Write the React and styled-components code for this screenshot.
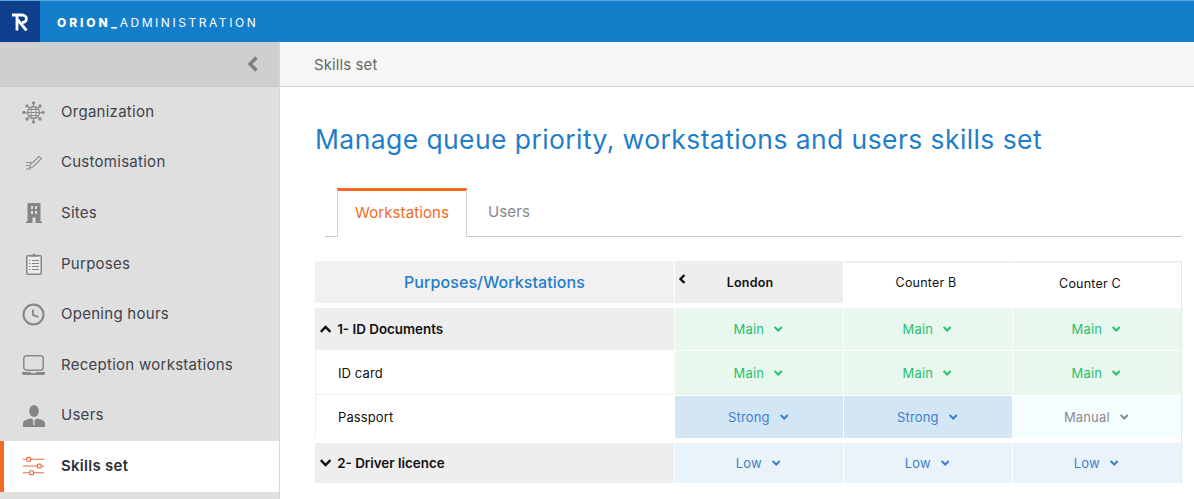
import React from "react";
import styled, { createGlobalStyle } from "styled-components";

const GlobalStyle = createGlobalStyle`
  html, body {
    margin: 0;
    padding: 0;
    height: 100%;
    overflow: hidden;
    background: #fff;
    font-family: "Inter", "Noto Sans", sans-serif;
  }
  * { box-sizing: border-box; }
`;

const Page = styled.div`
  width: 1194px;
  height: 499px;
  display: flex;
  flex-direction: column;
  overflow: hidden;
`;

const TopBar = styled.header`
  height: 42px;
  flex: none;
  background: #157ecb;
  border-top: 1px solid #5aa5dc;
  display: flex;
`;

const LogoBox = styled.div`
  width: 40px;
  background: #0d3f8c;
  display: flex;
  align-items: center;
  justify-content: center;
`;

const Brand = styled.div`
  margin-left: 17px;
  padding-top: 1px;
  display: flex;
  align-items: center;
  color: #fff;
  font-size: 12px;
  letter-spacing: 2.55px;
  b { font-weight: 800; letter-spacing: 2.9px; }
  span { font-weight: 400; }
`;

const Body = styled.div`
  flex: 1;
  display: flex;
  min-height: 0;
`;

const Sidebar = styled.aside`
  width: 280px;
  flex: none;
  background: #dfdfdf;
  border-right: 1px solid #d6d6d6;
`;

const Collapse = styled.div`
  height: 45px;
  background: #cfcfcf;
  border-bottom: 1px solid #c4c4c4;
  display: flex;
  align-items: center;
  justify-content: flex-end;
  padding-right: 20px;
`;

const NavItem = styled.div`
  height: 50.6px;
  display: flex;
  align-items: center;
  gap: 16px;
  padding-left: ${(p) => (p.$active ? "18px" : "22px")};
  font-size: 15px;
  letter-spacing: 0.27px;
  color: ${(p) => (p.$active ? "#2c2f36" : "#3f434c")};
  font-weight: ${(p) => (p.$active ? 600 : 400)};
  background: ${(p) => (p.$active ? "#fff" : "transparent")};
  border-left: ${(p) => (p.$active ? "4px solid #f26a25" : "none")};
`;

const NavLabel = styled.span`
  padding-bottom: 2px;
`;

const IconSlot = styled.span`
  width: 23px;
  height: 24px;
  flex: none;
  display: flex;
  align-items: center;
  justify-content: center;
`;

const Main = styled.main`
  flex: 1;
  min-width: 0;
`;

const Crumb = styled.div`
  height: 45px;
  background: #f6f6f6;
  border-bottom: 1px solid #d4d4d4;
  padding-left: 34px;
  display: flex;
  align-items: center;
  font-size: 15px;
  letter-spacing: 0.1px;
  color: #666;
`;

const Content = styled.div`
  padding: 36px 12px 0 35px;
`;

const Title = styled.h1`
  margin: 0;
  font-size: 26.5px;
  letter-spacing: 0.41px;
  line-height: 32px;
  font-weight: 400;
  color: #1f7dc9;
  white-space: nowrap;
`;

const Tabs = styled.div`
  margin: 33px 0 0 10px;
  height: 49px;
  display: flex;
  align-items: stretch;
  padding-left: 12px;
  border-bottom: 1px solid #c8c8c8;
`;

const Tab = styled.div`
  width: ${(p) => (p.$active ? "130px" : "84px")};
  display: flex;
  justify-content: center;
  align-items: center;
  font-size: 15px;
  letter-spacing: 0.1px;
  color: ${(p) => (p.$active ? "#f26a25" : "#85888f")};
  background: #fff;
  padding-bottom: ${(p) => (p.$active ? "3px" : "5px")};
  border-top: ${(p) => (p.$active ? "3px solid #f26a25" : "3px solid transparent")};
  border-left: 1px solid ${(p) => (p.$active ? "#d0d0d0" : "transparent")};
  border-right: 1px solid ${(p) => (p.$active ? "#d0d0d0" : "transparent")};
  margin-bottom: ${(p) => (p.$active ? "-1px" : "0")};
`;

const Table = styled.div`
  margin-top: 24px;
  width: 867px;
  border-right: 1px solid #e4e8ee;
`;

const Row = styled.div`
  display: grid;
  grid-template-columns: 359px 168px 168px 168px;
  column-gap: 1px;
  height: ${(p) => p.$h}px;
  margin-bottom: ${(p) => p.$mb ?? 1}px;
`;

const HeadLabel = styled.div`
  background: #f2f0f1;
  color: #1f7dc9;
  font-size: 16px;
  letter-spacing: 0.08px;
  font-weight: 500;
  display: flex;
  align-items: center;
  justify-content: center;
`;

const HeadCell = styled.div`
  position: relative;
  display: flex;
  align-items: center;
  justify-content: center;
  padding-right: ${(p) => p.$pad}px;
  padding-bottom: ${(p) => p.$lift || 0}px;
  font-size: 12.5px;
  letter-spacing: 0.2px;
  color: #111;
  font-weight: ${(p) => (p.$active ? 600 : 400)};
  background: ${(p) => (p.$active ? "#eeeeee" : "#fff")};
  border-top: ${(p) => (p.$active ? "none" : "2px solid #eeeeee")};
`;

const PrevArrow = styled.span`
  position: absolute;
  left: 3px;
  top: 13px;
  display: flex;
`;

const GroupName = styled.div`
  background: #eeeeee;
  color: #111;
  font-size: 13.4px;
  font-weight: 600;
  display: flex;
  align-items: center;
  gap: 6px;
  padding-left: 5px;
`;

const ItemName = styled.div`
  background: #fff;
  color: #111;
  font-size: 13px;
  letter-spacing: 0.1px;
  display: flex;
  align-items: center;
  padding-left: 22px;
  border-left: 1px solid #eeeeee;
  border-bottom: ${(p) => (p.$line ? "1px solid #eeeeee" : "none")};
`;

const levels = {
  Main: { bg: "#e8f8ef", fg: "#27c06e" },
  Strong: { bg: "#d3e6f5", fg: "#3d80c8" },
  Manual: { bg: "#f5fefe", fg: "#8a8a8e" },
  Low: { bg: "#ebf3fa", fg: "#3d80c8" },
};

const LevelCell = styled.div`
  background: ${(p) => levels[p.$level].bg};
  color: ${(p) => levels[p.$level].fg};
  font-size: 13px;
  letter-spacing: 0.15px;
  display: flex;
  align-items: center;
  justify-content: center;
  gap: 10px;
  padding-right: 2px;
`;

const Chevron = ({ up, size = 8, width = 2 }) => (
  <svg width={size * 1.4} height={size} viewBox="0 0 14 10" fill="none">
    <path
      d={up ? "M1 8.5 L7 2.5 L13 8.5" : "M1 1.5 L7 7.5 L13 1.5"}
      stroke="currentColor"
      strokeWidth={width}
    />
  </svg>
);

const Logo = () => (
  <svg width="16" height="18" viewBox="0 0 16 18" fill="none" stroke="#fff" strokeWidth="2.8">
    <path d="M0 2 H10 C13 2 14.4 4 14.4 5.5 C14.4 8 12.5 9.5 10 9.5" />
    <path d="M5 2 V17.5 M5 6 L14.5 17.5" />
  </svg>
);

const GlobeIcon = () => (
  <svg width="23" height="23" viewBox="0 0 23 23" fill="none" stroke="#8d8d8d">
    <circle cx="11.5" cy="11.5" r="6" strokeWidth="1.3" />
    <ellipse cx="11.5" cy="11.5" rx="2.6" ry="6" />
    <path d="M5.5 11.5 H17.5 M6.5 8.5 H16.5 M6.5 14.5 H16.5" />
    <path d="M11.5 2 V5 M11.5 18 V21 M2 11.5 H5 M18 11.5 H21 M5 5 L7 7 M18 5 L16 7 M5 18 L7 16 M18 18 L16 16" />
    <g fill="#8d8d8d" stroke="none">
      <circle cx="11.5" cy="2" r="1.7" />
      <circle cx="11.5" cy="21" r="1.7" />
      <circle cx="2" cy="11.5" r="1.7" />
      <circle cx="21" cy="11.5" r="1.7" />
      <circle cx="5" cy="5" r="1.7" />
      <circle cx="18" cy="5" r="1.7" />
      <circle cx="5" cy="18" r="1.7" />
      <circle cx="18" cy="18" r="1.7" />
    </g>
  </svg>
);

const PenIcon = () => (
  <svg width="18" height="16" viewBox="0 0 18 16" fill="none" stroke="#8f8f8f" strokeWidth="1.1">
    <path d="M5 10 L14 1.5 L16.5 3.5 L8 12 L4.5 13 Z" />
    <path d="M1 7.5 H7 M1 10.5 H4 M1 14 H6" />
  </svg>
);

const BuildingIcon = () => (
  <svg width="16" height="20" viewBox="0 0 16 20">
    <path
      fillRule="evenodd"
      fill="#858585"
      d="M1.5 0 H14.5 V18.5 H16 V20 H0 V18.5 H1.5 Z M5 3 V6 H7 V3 Z M9 3 V6 H11 V3 Z M5 8 V11 H7 V8 Z M9 8 V11 H11 V8 Z M6.5 14.5 V20 H9.5 V14.5 Z"
    />
  </svg>
);

const ClipboardIcon = () => (
  <svg width="16" height="22" viewBox="0 0 16 22" fill="none">
    <rect x="0.75" y="2.75" width="14.5" height="18.5" rx="1" fill="#ececec" stroke="#858585" strokeWidth="1.5" />
    <path d="M4 3.5 H12 V1.8 H9.5 L8 0.5 L6.5 1.8 H4 Z" fill="#858585" />
    <path d="M3 7.5 H4.5 M6 7.5 H13 M3 10.5 H4.5 M6 10.5 H13 M3 13.5 H4.5 M6 13.5 H13 M3 16.5 H4.5 M6 16.5 H13" stroke="#858585" />
  </svg>
);

const ClockIcon = () => (
  <svg width="23" height="23" viewBox="0 0 23 23" fill="none" stroke="#858585">
    <circle cx="11.5" cy="11.5" r="10" strokeWidth="2" />
    <path d="M11 6.5 V12 L16.5 14" strokeWidth="1.8" />
  </svg>
);

const LaptopIcon = () => (
  <svg width="23" height="20" viewBox="0 0 23 20" fill="none">
    <rect x="1.8" y="0.8" width="19.4" height="14.4" rx="3" stroke="#8a8a8a" strokeWidth="1.5" />
    <path d="M0 17 H23 V18 C23 19 22.5 20 21.5 20 H1.5 C0.5 20 0 19 0 18 Z" fill="#8a8a8a" />
    <path d="M9 17.6 H14" stroke="#dfdfdf" />
  </svg>
);

const UserIcon = () => (
  <svg width="22" height="22" viewBox="0 0 22 22">
    <ellipse cx="11" cy="6" rx="4.8" ry="6" fill="#858585" />
    <path d="M0 22 V18.5 C0 15.5 4 14.3 8 13.5 L10.3 15 L10.3 20 H11.7 V15 L14 13.5 C18 14.3 22 15.5 22 18.5 V22 Z" fill="#858585" />
  </svg>
);

const SlidersIcon = () => (
  <svg width="24" height="20" viewBox="0 0 24 20" fill="none" stroke="#f2693a" strokeWidth="1.2">
    <path d="M1 3 H5 M9 3 H23 M1 10 H16 M20 10 H23 M1 17 H8 M12 17 H23" />
    <rect x="5" y="1" width="4" height="4" rx="1" />
    <rect x="16" y="8" width="4" height="4" rx="1" />
    <rect x="8" y="15" width="4" height="4" rx="1" />
  </svg>
);

const navItems = [
  { label: "Organization", icon: <GlobeIcon /> },
  { label: "Customisation", icon: <PenIcon /> },
  { label: "Sites", icon: <BuildingIcon /> },
  { label: "Purposes", icon: <ClipboardIcon /> },
  { label: "Opening hours", icon: <ClockIcon /> },
  { label: "Reception workstations", icon: <LaptopIcon /> },
  { label: "Users", icon: <UserIcon /> },
  { label: "Skills set", icon: <SlidersIcon />, active: true },
];

const rows = [
  { name: "1- ID Documents", group: true, open: true, h: 42, level: ["Main", "Main", "Main"] },
  { name: "ID card", h: 44, line: true, level: ["Main", "Main", "Main"] },
  { name: "Passport", h: 42, mb: 5, level: ["Strong", "Strong", "Manual"] },
  { name: "2- Driver licence", group: true, h: 40, level: ["Low", "Low", "Low"] },
];

const App = () => {
  return (
    <Page>
      <GlobalStyle />
      <TopBar>
        <LogoBox>
          <Logo />
        </LogoBox>
        <Brand>
          <b>ORION_</b>
          <span>ADMINISTRATION</span>
        </Brand>
      </TopBar>
      <Body>
        <Sidebar>
          <Collapse>
            <svg width="12" height="16" viewBox="0 0 12 16" fill="none">
              <path d="M9.5 1.5 L3 8 L9.5 14.5" stroke="#808080" strokeWidth="3.4" />
            </svg>
          </Collapse>
          {navItems.map((item) => (
            <NavItem key={item.label} $active={item.active}>
              <IconSlot>{item.icon}</IconSlot>
              <NavLabel>{item.label}</NavLabel>
            </NavItem>
          ))}
        </Sidebar>
        <Main>
          <Crumb>Skills set</Crumb>
          <Content>
            <Title>Manage queue priority, workstations and users skills set</Title>
            <Tabs>
              <Tab $active>Workstations</Tab>
              <Tab>Users</Tab>
            </Tabs>
            <Table>
              <Row $h={42} $mb={5}>
                <HeadLabel>Purposes/Workstations</HeadLabel>
                <HeadCell $active $pad={18}>
                  <PrevArrow>
                    <svg width="8" height="10" viewBox="0 0 8 10" fill="none">
                      <path d="M6.5 1 L2.5 5 L6.5 9" stroke="#111" strokeWidth="2.4" />
                    </svg>
                  </PrevArrow>
                  London
                </HeadCell>
                <HeadCell $pad={4} $lift={2}>Counter B</HeadCell>
                <HeadCell $pad={14}>Counter C</HeadCell>
              </Row>
              {rows.map((row) => (
                <Row key={row.name} $h={row.h} $mb={row.mb}>
                  {row.group ? (
                    <GroupName>
                      <Chevron up={row.open} size={8} width={3} />
                      {row.name}
                    </GroupName>
                  ) : (
                    <ItemName $line={row.line}>{row.name}</ItemName>
                  )}
                  {row.level.map((level, i) => (
                    <LevelCell key={i} $level={level}>
                      {level}
                      <Chevron size={6} width={3.4} />
                    </LevelCell>
                  ))}
                </Row>
              ))}
            </Table>
          </Content>
        </Main>
      </Body>
    </Page>
  );
};

export default App;
